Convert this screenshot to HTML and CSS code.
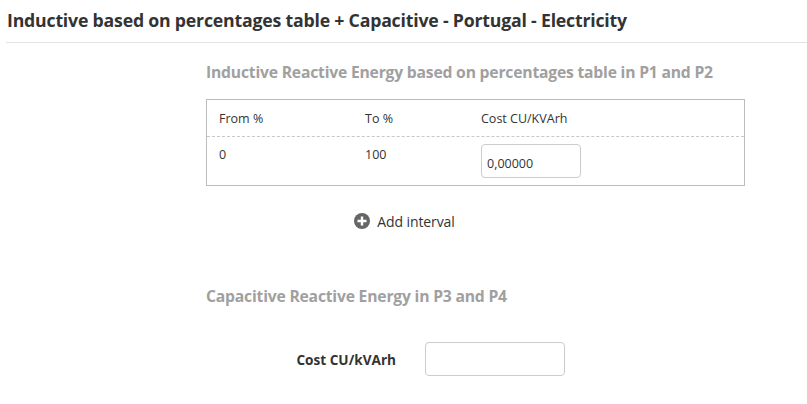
FILE: index.html
```html
<!DOCTYPE html>
<html>
<head>
<meta charset="utf-8">
<link rel="stylesheet" href="styles.css">
</head>
<body>
<div class="page">
  <h1 class="title">Inductive based on percentages table + Capacitive - Portugal - Electricity</h1>
  <div class="content">
    <h2 class="subhead">Inductive Reactive Energy based on percentages table in P1 and P2</h2>
    <div class="table">
      <div class="row head">
        <div class="c1">From %</div>
        <div class="c2">To %</div>
        <div class="c3">Cost CU/KVArh</div>
      </div>
      <div class="row body">
        <div class="c1">0</div>
        <div class="c2">100</div>
        <div class="c3"><input class="cell-input" type="text" value="0,00000"></div>
      </div>
    </div>
  </div>
  <div class="add">
    <svg class="add-icon" width="16" height="16" viewBox="0 0 16 16"><circle cx="8" cy="8" r="8" fill="#666"/><path d="M8 3.5v9M3.5 8h9" stroke="#fff" stroke-width="2.4"/></svg>
    <span>Add interval</span>
  </div>
  <div class="content">
    <h2 class="subhead sub2">Capacitive Reactive Energy in P3 and P4</h2>
  </div>
  <div class="field">
    <label class="field-label">Cost CU/kVArh</label>
    <input class="field-input" type="text">
  </div>
</div>
</body>
</html>
```
FILE: styles.css
```css
html, body { margin: 0; padding: 0; background: #fff; }
body { font-family: "Open Sans", "DejaVu Sans", sans-serif; color: #333; }
.page { padding-left: 6px; }
.title {
  margin: 0;
  padding: 8px 0 0 1px;
  height: 34px;
  font-size: 17.7px;
  font-weight: 700;
  letter-spacing: -0.2px;
  color: #333;
  border-bottom: 1px solid #e3e3e3;
  line-height: 24px;
}
.content { padding-left: 200px; width: 539px; }
.subhead {
  margin: 0;
  padding-top: 18px;
  font-size: 15.7px;
  font-weight: 700;
  color: #a0a0a0;
  line-height: 22px;
  letter-spacing: -0.2px;
}
.table {
  margin-top: 16px;
  border: 1px solid #bcbcbc;
  font-size: 12.5px;
  color: #333;
}
.row { display: grid; grid-template-columns: 146px 116px 1fr; padding-left: 12px; }
.row.head { height: 36px; align-items: center; border-bottom: 1px dashed #c8c8c8; }
.row.body { height: 48px; align-items: start; }
.row.body .c1, .row.body .c2 { padding-top: 9px; line-height: 18px; }
.row.body .c3 { padding-top: 7px; }
.cell-input {
  box-sizing: border-box;
  width: 100px; height: 34px;
  border: 1px solid #ccc; border-radius: 4px;
  padding: 4px 5px 0; font: 12.5px "Open Sans", sans-serif; color: #333;
}
.add {
  display: flex; align-items: center; justify-content: center; gap: 7px;
  margin-top: 25px; height: 20px;
  font-size: 14px; color: #333;
  padding-right: 4px;
}
.add span { letter-spacing: -0.1px; }
.sub2 { padding-top: 54px; }
.field {
  display: grid; grid-template-columns: 390px 140px; column-gap: 29px;
  align-items: center; margin-top: 35px;
}
.field-label { text-align: right; font-size: 13.6px; font-weight: 700; color: #333; }
.field-input {
  box-sizing: border-box; width: 140px; height: 34px;
  border: 1px solid #ccc; border-radius: 4px;
}
```
